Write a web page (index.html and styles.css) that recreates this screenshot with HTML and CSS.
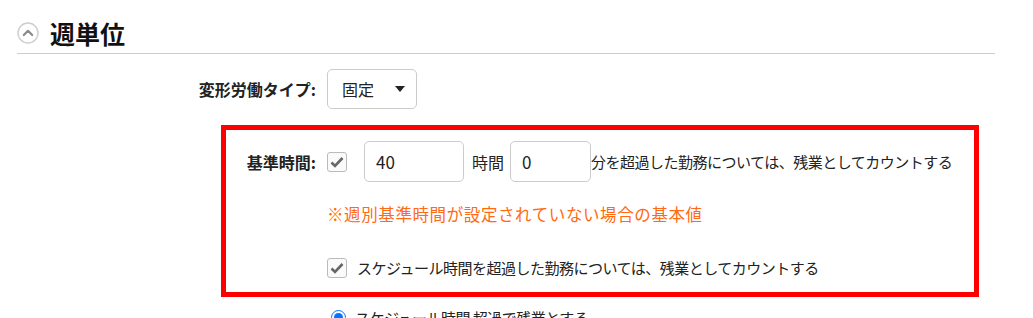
FILE: index.html
```html
<!DOCTYPE html>
<html lang="ja">
<head>
    <meta charset="UTF-8">
    <title>週単位</title>
    <link rel="stylesheet" href="styles.css">
</head>
<body>
    <div class="section">
        <div class="section-head">
            <span class="collapse-btn">
                <svg width="22" height="22" viewBox="0 0 22 22"><circle cx="11" cy="11" r="10" fill="#fff" stroke="#cfcfcf" stroke-width="1.5"/><path d="M6.8 13 L11 8.8 L15.2 13" fill="none" stroke="#8a8a8a" stroke-width="2.2" stroke-linecap="round" stroke-linejoin="round"/></svg>
            </span>
            <h2>週単位</h2>
        </div>

        <div class="form">
            <div class="row type-row">
                <label class="field-label">変形労働タイプ:</label>
                <div class="select">
                    <span>固定</span>
                    <svg width="10" height="6" viewBox="0 0 10 6"><path d="M0 0 H10 L5 6 Z" fill="#222"/></svg>
                </div>
            </div>

            <div class="highlight">
                <div class="row">
                    <label class="field-label">基準時間:</label>
                    <span class="check">
                        <svg width="14" height="12" viewBox="0 0 14 12"><path d="M1.5 6.5 L5 10 L12.5 2" fill="none" stroke="#666" stroke-width="2.6"/></svg>
                    </span>
                    <input class="num hours" type="text" value="40">
                    <span class="unit">時間</span>
                    <input class="num minutes" type="text" value="0">
                    <span class="text">分を超過した勤務については、残業としてカウントする</span>
                </div>
                <div class="note">※週別基準時間が設定されていない場合の基本値</div>
                <div class="row sub-row">
                    <span class="check">
                        <svg width="14" height="12" viewBox="0 0 14 12"><path d="M1.5 6.5 L5 10 L12.5 2" fill="none" stroke="#666" stroke-width="2.6"/></svg>
                    </span>
                    <span class="text">スケジュール時間を超過した勤務については、残業としてカウントする</span>
                </div>
            </div>

            <div class="row radio-row">
                <input type="radio" name="mode" checked>
                <span class="text">スケジュール時間 超過で残業とする</span>
            </div>
        </div>
    </div>
</body>
</html>
```

FILE: styles.css
```css
body {
    margin: 0;
    font-family: "Noto Sans CJK JP", "Noto Sans", sans-serif;
    color: #222;
    background-color: #fff;
}
.section {
    padding: 12px 38px 0 17px;
}
.section-head {
    display: flex;
    align-items: center;
    height: 41px;
    border-bottom: 1px solid #ccc;
}
.collapse-btn {
    display: flex;
    width: 22px;
    height: 22px;
    margin-right: 11px;
}
h2 {
    margin: 0;
    font-size: 25px;
    font-weight: bold;
    color: #111;
    line-height: 30px;
}
.row {
    display: flex;
    align-items: center;
}
.field-label {
    flex-shrink: 0;
    box-sizing: border-box;
    width: 101px;
    padding-right: 11px;
    text-align: right;
    font-size: 16px;
    font-weight: bold;
    white-space: nowrap;
}
.type-row {
    margin-top: 15px;
}
.type-row .field-label {
    width: 310px;
}
.select {
    display: flex;
    align-items: center;
    justify-content: space-between;
    box-sizing: border-box;
    width: 90px;
    height: 40px;
    padding: 0 11px 0 14px;
    border: 1px solid #ccc;
    border-radius: 5px;
    font-size: 16px;
}
.highlight {
    box-sizing: border-box;
    width: 758px;
    height: 172px;
    margin: 16px 0 0 204px;
    border: 5px solid #ff0000;
}
.highlight .row:first-child {
    margin-top: 11px;
}
.check {
    display: flex;
    align-items: center;
    justify-content: center;
    flex-shrink: 0;
    box-sizing: border-box;
    width: 20px;
    height: 20px;
    border: 1px solid #bbb;
    border-radius: 3px;
    background-color: #fafafa;
}
.num {
    box-sizing: border-box;
    height: 41px;
    padding: 0 11px;
    border: 1px solid #ccc;
    border-radius: 5px;
    font-family: inherit;
    font-size: 17px;
    color: #222;
}
.hours {
    width: 100px;
    margin-left: 17px;
}
.minutes {
    width: 81px;
}
.unit {
    margin: 0 6px 0 8px;
    font-size: 16px;
}
.text {
    font-size: 15px;
    letter-spacing: -0.5px;
    white-space: nowrap;
}
.note {
    margin: 20px 0 0 101px;
    line-height: 24px;
    font-size: 16.5px;
    letter-spacing: 0.6px;
    color: #ff6a13;
}
.sub-row {
    margin: 31px 0 0 101px;
}
.sub-row .check {
    margin-right: 10px;
}
.radio-row {
    margin: 10px 0 0 314px;
}
.radio-row input {
    width: 15px;
    height: 15px;
    margin: 0 9px 0 0;
}
```
